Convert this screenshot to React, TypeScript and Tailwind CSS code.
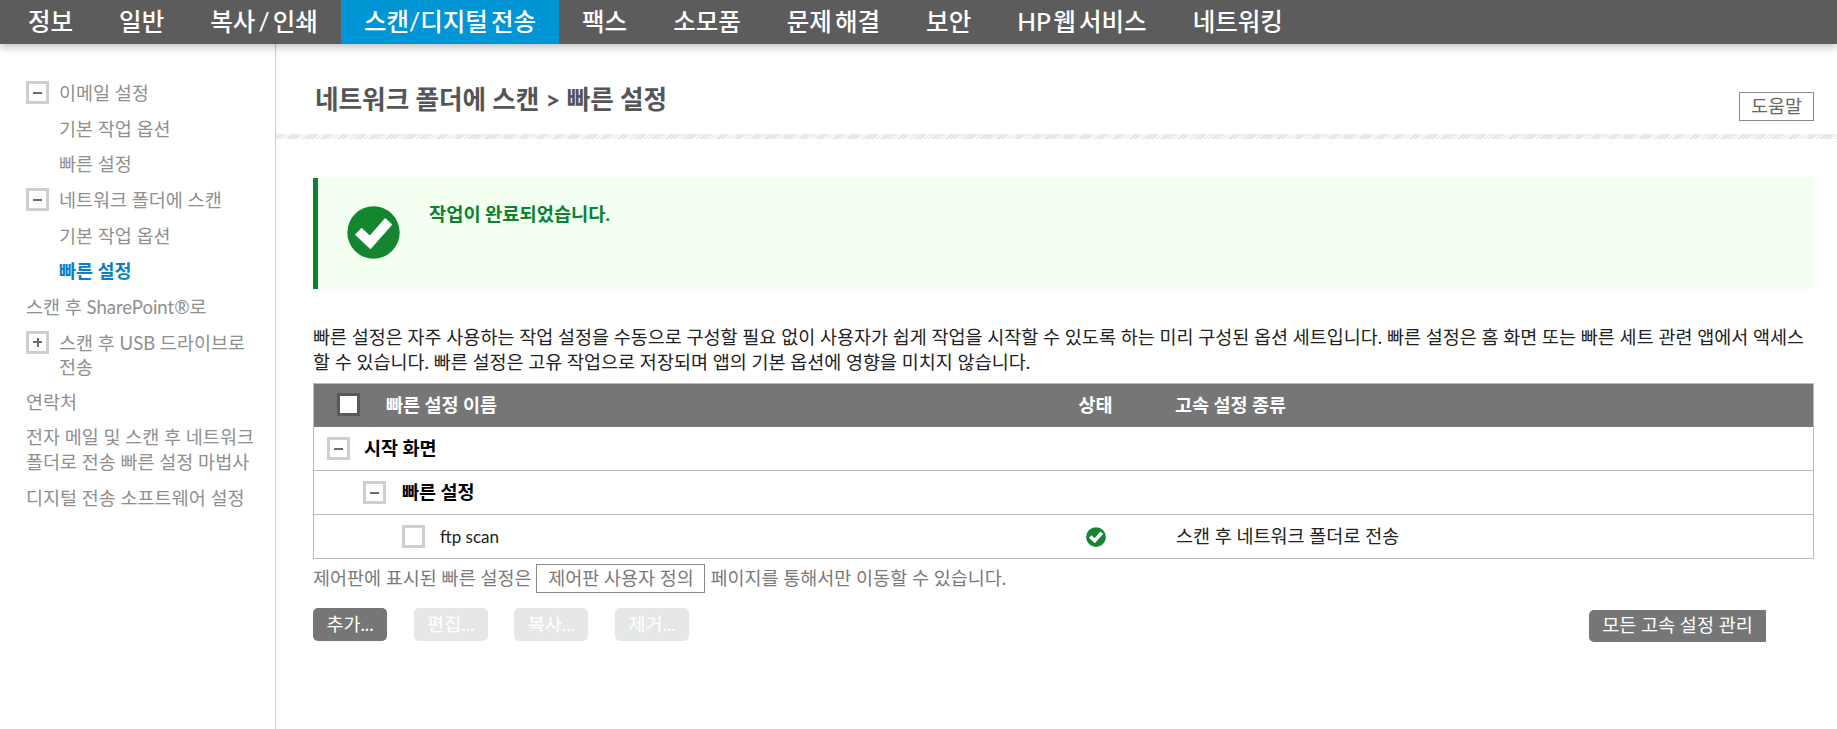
const font = '[font-family:"Lato","Noto_Sans_CJK_KR",sans-serif]';

const navItems = ['정보', '일반', '복사 / 인쇄', '스캔/디지털 전송', '팩스', '소모품', '문제 해결', '보안', 'HP 웹 서비스', '네트워킹'];

function TreeBox({ mark, className = '' }: { mark?: 'minus' | 'plus'; className?: string }) {
  return (
    <span className={`relative flex h-[23px] w-[23px] shrink-0 items-center justify-center border-[3px] border-[#cfcfcf] bg-white ${className}`}>
      {mark && <span className="h-[2px] w-[9px] bg-[#6b6b6b]" />}
      {mark === 'plus' && <span className="absolute h-[9px] w-[2px] bg-[#6b6b6b]" />}
    </span>
  );
}

function CheckCircle({ className }: { className: string }) {
  return (
    <svg viewBox="0 0 160 160" className={className}>
      <circle cx="80" cy="80" r="79" fill="#14862f" />
      <path d="M34 76 L70 110 L126 46" fill="none" stroke="#fff" strokeWidth="29" />
    </svg>
  );
}

function Sidebar() {
  return (
    <aside className="flex w-[276px] shrink-0 flex-col gap-[10.7px] border-r border-[#cccccc] pt-[37px] pr-[16px] pl-[26px] text-[18.5px] leading-[25px] text-[#8f8f8f]">
      <div className="flex gap-[10px]"><TreeBox mark="minus" /><span>이메일 설정</span></div>
      <div className="pl-[33px]">기본 작업 옵션</div>
      <div className="pl-[33px]">빠른 설정</div>
      <div className="flex gap-[10px]"><TreeBox mark="minus" /><span>네트워크 폴더에 스캔</span></div>
      <div className="pl-[33px]">기본 작업 옵션</div>
      <div className="pl-[33px] font-bold text-[#0a7fc4]">빠른 설정</div>
      <div>스캔 후 SharePoint®로</div>
      <div className="flex gap-[10px] leading-6"><TreeBox mark="plus" /><span>스캔 후 USB 드라이브로 전송</span></div>
      <div>연락처</div>
      <div>전자 메일 및 스캔 후 네트워크 폴더로 전송 빠른 설정 마법사</div>
      <div>디지털 전송 소프트웨어 설정</div>
    </aside>
  );
}

function ActionButton({ label, disabled }: { label: string; disabled?: boolean }) {
  return (
    <button className={`flex h-[33px] w-[74px] items-center justify-center rounded-[5px] text-[18.5px] text-white ${disabled ? 'bg-[#e6e8e8]' : 'bg-[#767676]'}`}>
      {label}
    </button>
  );
}

function QuickSetTable() {
  return (
    <div className="mt-2 border border-[#bbbbbb] text-[18.5px] leading-6">
      <div className="flex h-[43px] items-center bg-[#767676] pb-[2px] font-bold text-white">
        <span className="ml-[23px] h-[23px] w-[23px] border-[3px] border-[#595959] bg-white" />
        <span className="ml-[26px] w-[671px]">빠른 설정 이름</span>
        <span className="w-[77px] text-center">상태</span>
        <span className="ml-[41px]">고속 설정 종류</span>
      </div>
      <div className="flex h-[44px] items-center border-b border-[#bbbbbb] font-bold text-black">
        <TreeBox mark="minus" className="ml-[13px]" />
        <span className="mb-[2px] ml-[14px]">시작 화면</span>
      </div>
      <div className="flex h-[44px] items-center border-b border-[#bbbbbb] font-bold text-black">
        <TreeBox mark="minus" className="ml-[49px]" />
        <span className="mb-[2px] ml-[16px]">빠른 설정</span>
      </div>
      <div className="flex h-[43px] items-center text-[#222222]">
        <TreeBox className="ml-[88px]" />
        <span className="ml-[15px] w-[617px] text-[17px]">ftp scan</span>
        <span className="flex w-[77px] justify-center">
          <CheckCircle className="h-5 w-5" />
        </span>
        <span className="mb-[2px] ml-[42px]">스캔 후 네트워크 폴더로 전송</span>
      </div>
    </div>
  );
}

export default function App() {
  return (
    <div className={`flex h-[729px] w-full flex-col overflow-hidden bg-white ${font}`}>
      <nav className="relative z-10 flex h-11 shrink-0 bg-[#5c5c5c] pl-[5px] text-[24.5px] font-medium [word-spacing:-3px] text-white shadow-[0_3px_8px_rgba(0,0,0,0.25)]">
        {navItems.map((item) => (
          <div
            key={item}
            className={`flex h-full items-center px-[23px] whitespace-nowrap ${item === '스캔/디지털 전송' ? 'bg-[#0096d6]' : ''}`}
          >
            {item}
          </div>
        ))}
      </nav>
      <div className="flex min-h-0 flex-1">
        <Sidebar />
        <main className="min-w-0 flex-1">
          <header className="flex h-[90px] items-start justify-between pr-[23px] pl-[39px]">
            <h1 className="mt-[37px] text-[25.6px] leading-9 font-bold text-[#555555]">네트워크 폴더에 스캔 &gt; 빠른 설정</h1>
            <button className="mt-[48px] flex h-[29px] w-[75px] items-center justify-center border border-[#888888] text-[18.5px] text-[#666666]">
              도움말
            </button>
          </header>
          <div className="h-[5px] bg-[repeating-linear-gradient(135deg,#dddddd_0,#dddddd_1px,#ffffff_1px,#ffffff_2px)]" />
          <div className="pr-[23px] pl-[37px]">
            <div className="mt-[39px] flex h-[111px] border-l-[5px] border-[#0a8230] bg-[#f3fff0]">
              <CheckCircle className="mt-[28px] ml-[29px] h-[53px] w-[53px]" />
              <p className="mt-[22px] ml-[29px] text-[18.7px] leading-7 font-bold text-[#0a8230]">작업이 완료되었습니다.</p>
            </div>
            <p className="mt-[36px] text-[18.5px] leading-[25px] text-[#222222]">
              빠른 설정은 자주 사용하는 작업 설정을 수동으로 구성할 필요 없이 사용자가 쉽게 작업을 시작할 수 있도록 하는 미리 구성된 옵션 세트입니다. 빠른 설정은 홈 화면 또는 빠른 세트 관련 앱에서 액세스할 수 있습니다. 빠른 설정은 고유 작업으로 저장되며 앱의 기본 옵션에 영향을 미치지 않습니다.
            </p>
            <QuickSetTable />
            <div className="mt-[5px] flex h-[29px] items-center text-[18.5px] text-[#7a7a7a]">
              <span>제어판에 표시된 빠른 설정은</span>
              <span className="mx-[5px] flex h-[29px] w-[169px] items-center justify-center border border-[#888888]">제어판 사용자 정의</span>
              <span>페이지를 통해서만 이동할 수 있습니다.</span>
            </div>
            <div className="mt-[15px] flex items-start">
              <div className="flex gap-[26.7px]">
                <ActionButton label="추가..." />
                <ActionButton label="편집..." disabled />
                <ActionButton label="복사..." disabled />
                <ActionButton label="제거..." disabled />
              </div>
              <button className="mt-[2px] mr-[48px] ml-auto flex h-[32px] w-[177px] items-center justify-center rounded-l-[5px] bg-[#767676] text-[18.5px] text-white">
                모든 고속 설정 관리
              </button>
            </div>
          </div>
        </main>
      </div>
    </div>
  );
}
